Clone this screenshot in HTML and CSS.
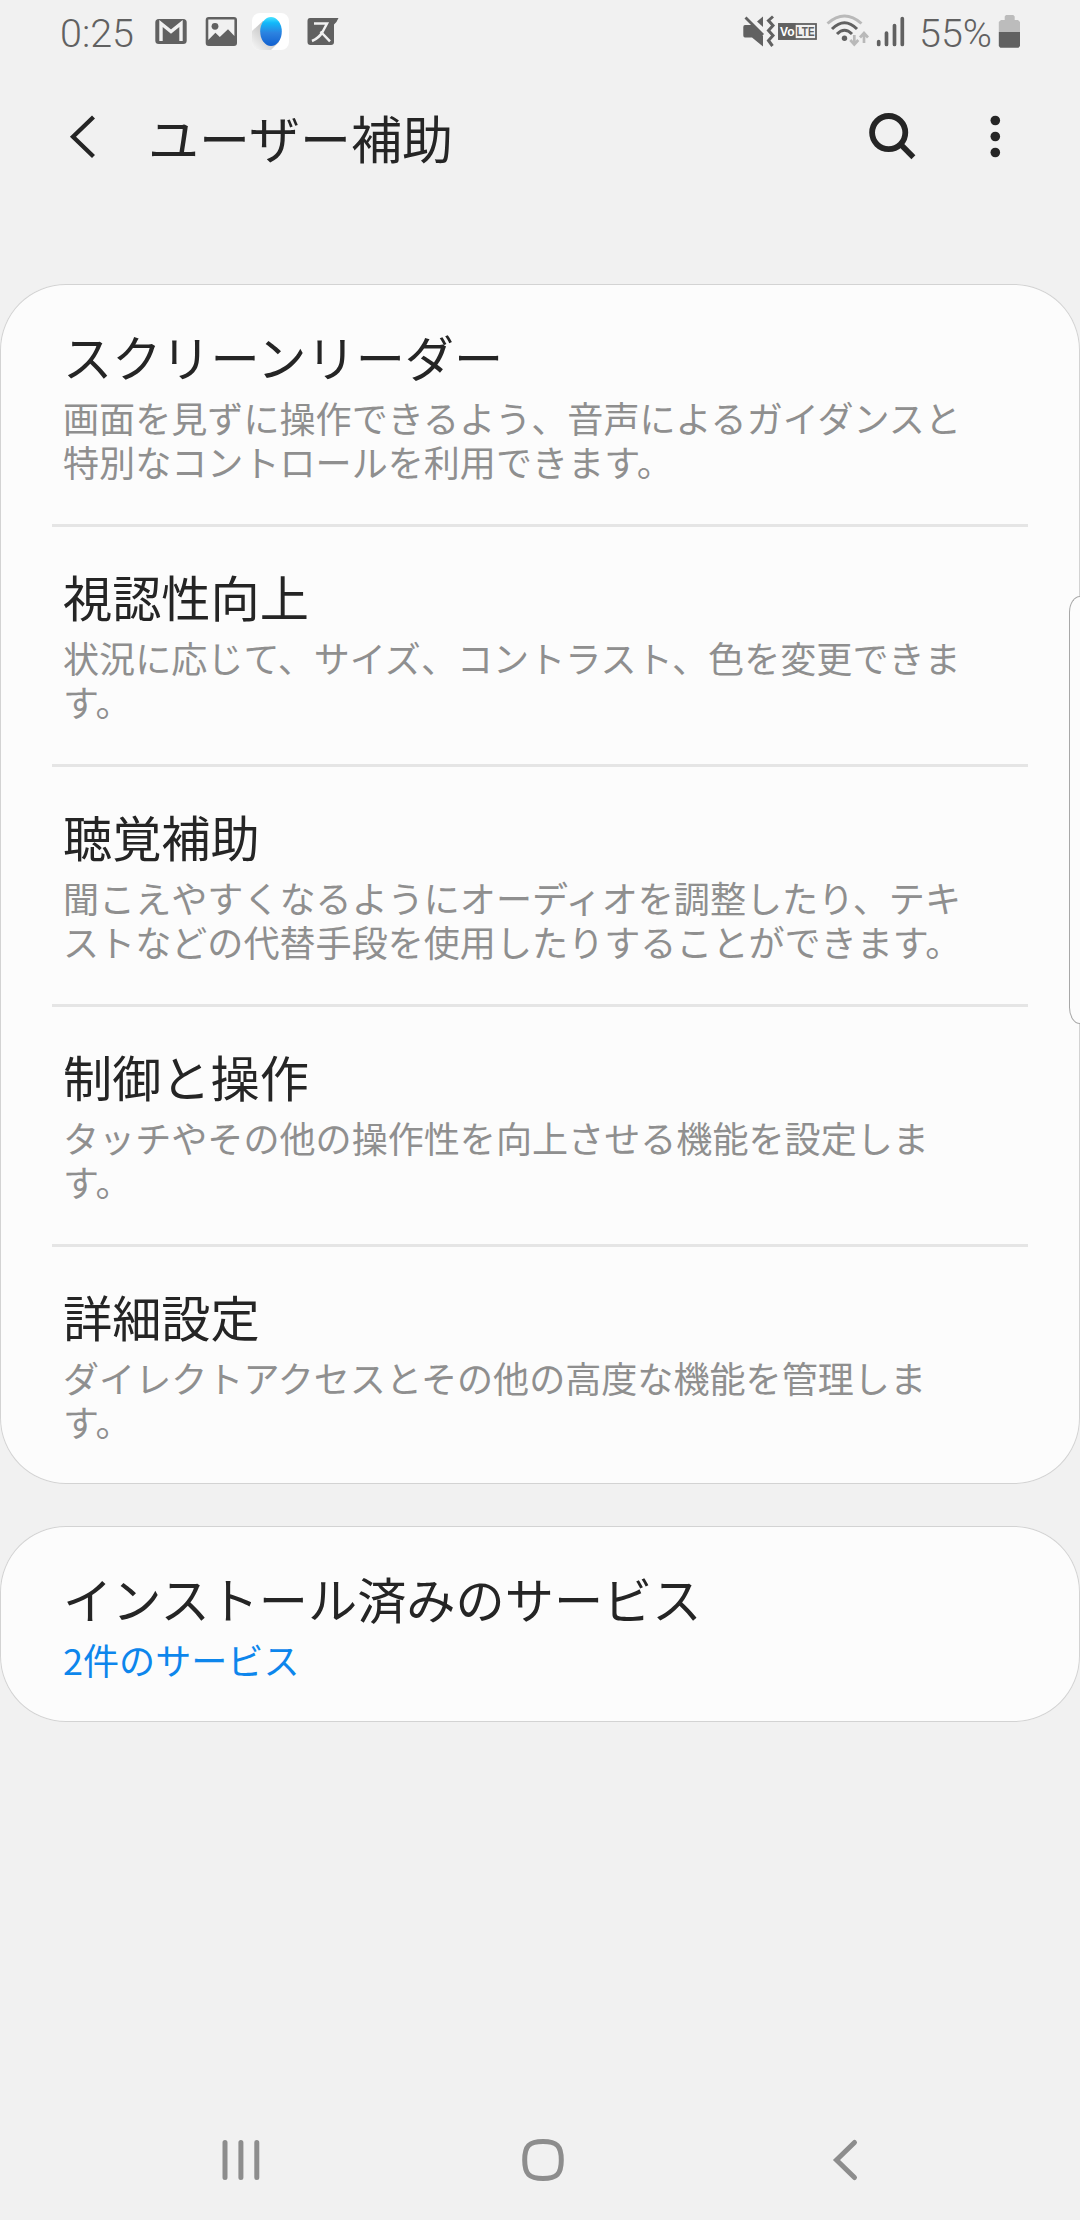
FILE: index.html
```html
<!DOCTYPE html>
<html lang="ja">
<head>
<meta charset="utf-8">
<title>ユーザー補助</title>
<link rel="stylesheet" href="styles.css">
</head>
<body>
<div class="screen">
  <div class="status">
    <span class="clock">0:25</span>
    <svg class="icon" width="50" height="64" viewBox="146 0 50 64">
      <rect x="155.3" y="19" width="31.4" height="25" rx="3.5" fill="#616161"/>
      <path d="M161 41V23.5L171 31.5L181 23.5V41" fill="none" stroke="#f1f1f1" stroke-width="3.4"/>
    </svg>
    <svg class="icon" width="50" height="64" viewBox="196 0 50 64">
      <rect x="205.7" y="17" width="31.3" height="29" rx="3" fill="#616161"/>
      <path d="M208.300 19.500H234.400V36L228 29.300L219.800 37L215.400 32.700L208.300 40Z" fill="#f1f1f1"/>
      <circle cx="215" cy="26.300" r="3.400" fill="#616161"/>
    </svg>
    <svg class="icon" width="50" height="64" viewBox="246 0 50 64">
      <defs>
        <linearGradient id="drop" x1="0" y1="0" x2="0" y2="1"><stop offset="0" stop-color="#4be4ff"/><stop offset=".2" stop-color="#12b9fa"/><stop offset=".55" stop-color="#2c82e0"/><stop offset="1" stop-color="#1261d0"/></linearGradient>
        <linearGradient id="shade" x1="1" y1="0" x2="0" y2="1"><stop offset=".3" stop-color="#bdbdbd"/><stop offset="1" stop-color="#fafafa"/></linearGradient>
      </defs>
      <rect x="252" y="13" width="37" height="37" rx="8" fill="#fff"/>
      <path d="M263 21L252 31V42Q252 50 260 50H271L279 42Z" fill="url(#shade)"/>
      <ellipse cx="271" cy="31.5" rx="10.800" ry="14.500" fill="url(#drop)"/>
    </svg>
    <svg class="icon" width="50" height="64" viewBox="296 0 50 64">
      <path d="M310 18H338.500Q337 22 334 24.500V42Q334 45 331 45H310.500Q307.500 45 307.500 42V21Q307.500 18 310 18Z" fill="#616161"/>
      <path d="M314 23.500H327L322.500 32Q319 38 312 41M320.500 31.500L330 41.300" fill="none" stroke="#f1f1f1" stroke-width="2.500"/>
    </svg>
    <span class="spacer"></span>
    <svg class="icon" width="36" height="64" viewBox="740 0 36 64">
      <path d="M745 25H752L763 36V46.500L752 37.500H745Q743.300 37.500 743.300 35.500V27Q743.300 25 745 25Z" fill="#616161"/>
      <path d="M763 16.500V27L757 21.500Z" fill="#616161"/>
      <path d="M745.500 17.500L763 35" stroke="#616161" stroke-width="2.800"/>
      <path d="M773 16.500L768.500 20.500L773 25.500L768.500 30.500L773 35.500L768.500 40.500L772.500 46" fill="none" stroke="#616161" stroke-width="3"/>
    </svg>
    <svg class="icon" width="46" height="64" viewBox="776 0 46 64">
      <rect x="779" y="24" width="37" height="15" fill="none" stroke="#616161" stroke-width="1.800"/>
      <rect x="778.200" y="23.200" width="17.500" height="16.600" fill="#616161"/>
      <text x="780" y="36.300" class="tag" fill="#fff" textLength="14.500" lengthAdjust="spacingAndGlyphs">Vo</text>
      <text x="796.500" y="36.300" class="tag" fill="#616161" textLength="18" lengthAdjust="spacingAndGlyphs">LTE</text>
    </svg>
    <svg class="icon" width="50" height="64" viewBox="822 0 50 64" fill="none">
      <path d="M827.500 23.500Q844.500 8.500 861.500 23.500" stroke="#b9b9b9" stroke-width="3"/>
      <path d="M832 29Q844.500 16.500 857 29" stroke="#616161" stroke-width="3"/>
      <path d="M837 34Q844.500 26.500 852 34" stroke="#616161" stroke-width="3"/>
      <circle cx="844.500" cy="38.300" r="2.700" fill="#616161"/>
      <path d="M854.300 35V44M850.300 40L854.300 44.500L858.300 40M864 43V33.500M860 37.500L864 33L868 37.500" stroke="#b9b9b9" stroke-width="2.700"/>
    </svg>
    <svg class="icon" width="46" height="64" viewBox="872 0 46 64">
      <path d="M878.700 41.500V44.500M886.500 33V44.500M894.500 25.500V44.500M902.300 18.500V44.500" stroke="#616161" stroke-width="3.700" stroke-linecap="round"/>
    </svg>
    <span class="percent">55%</span>
    <svg class="icon" width="30" height="64" viewBox="994 0 30 64">
      <path d="M998.800 32V22L1001 20H1004.700V16.500L1006 15H1013.300L1014.700 16.500V20H1018L1020 22V32Z" fill="#bcbcbc"/>
      <path d="M998.800 32H1020V46L1018.500 47.700H1000.300L998.800 46Z" fill="#616161"/>
    </svg>
  </div>

  <header class="appbar">
    <svg class="icon" width="60" height="60" viewBox="54 107 60 60"><path d="M93.500 117L73 136.800L93.500 156.500" fill="none" stroke="#252525" stroke-width="4.300"/></svg>
    <h1 class="heading">ユーザー補助</h1>
    <svg class="icon" width="60" height="60" viewBox="862 107 60 60"><circle cx="888.700" cy="132.600" r="16.600" fill="none" stroke="#252525" stroke-width="5.800"/><path d="M900.800 144.500L913.400 157.300" stroke="#252525" stroke-width="5.600"/></svg>
    <svg class="icon dots" width="40" height="60" viewBox="975 107 40 60" fill="#252525"><circle cx="995.300" cy="120.500" r="4.800"/><circle cx="995.300" cy="136.500" r="4.800"/><circle cx="995.300" cy="152.500" r="4.800"/></svg>
  </header>

  <main class="content">
    <section class="card">
      <div class="item"><h2 class="title">スクリーンリーダー</h2><p class="desc">画面を見ずに操作できるよう、音声によるガイダンスと<br>特別なコントロールを利用できます。</p></div>
      <div class="item"><h2 class="title">視認性向上</h2><p class="desc">状況に応じて、サイズ、コントラスト、色を変更できま<br>す。</p></div>
      <div class="item"><h2 class="title">聴覚補助</h2><p class="desc">聞こえやすくなるようにオーディオを調整したり、テキ<br>ストなどの代替手段を使用したりすることができます。</p></div>
      <div class="item"><h2 class="title">制御と操作</h2><p class="desc">タッチやその他の操作性を向上させる機能を設定しま<br>す。</p></div>
      <div class="item"><h2 class="title">詳細設定</h2><p class="desc">ダイレクトアクセスとその他の高度な機能を管理しま<br>す。</p></div>
    </section>
    <section class="card">
      <div class="item short"><h2 class="title">インストール済みのサービス</h2><p class="desc link">2件のサービス</p></div>
    </section>
  </main>

  <nav class="navbar">
    <svg class="icon" width="60" height="60" viewBox="211 2130 60 60"><path d="M225 2142.500V2177.500M240.900 2142.500V2177.500M256.800 2142.500V2177.500" stroke="#8d8d8d" stroke-width="5" stroke-linecap="round"/></svg>
    <svg class="icon" width="60" height="60" viewBox="513 2130 60 60"><path d="M543 2141.500C557 2141.500 561.300 2146 561.300 2160S557 2178.500 543 2178.500S524.700 2174 524.700 2160S529 2141.500 543 2141.500Z" fill="none" stroke="#8d8d8d" stroke-width="5"/></svg>
    <svg class="icon" width="60" height="60" viewBox="815 2130 60 60"><path d="M854.500 2142.500L836.500 2160L854.500 2177.500" fill="none" stroke="#8d8d8d" stroke-width="5" stroke-linecap="round"/></svg>
  </nav>
  <div class="edge-handle"></div>
</div>
</body>
</html>
```
FILE: styles.css
```css
* { box-sizing: border-box; }

body {
  margin: 0;
  background: #f1f1f1;
  font-family: "Noto Sans CJK JP", sans-serif;
  color: #252525;
}

h1, h2, p { margin: 0; font-weight: 400; }

.screen {
  position: relative;
  display: flex;
  flex-direction: column;
  width: 1080px;
  height: 2220px;
  overflow: hidden;
}

.icon { display: block; flex: none; }

.status {
  display: flex;
  height: 64px;
  padding: 0 56px 0 60px;
  font: 350 39.500px/67px Roboto, sans-serif;
  color: #616161;
}
.clock { width: 86px; white-space: nowrap; }
.percent { width: 76px; padding-left: 1px; white-space: nowrap; }
.spacer { flex: 1; }
.tag { font: 700 12.500px "Liberation Sans", sans-serif; }

.appbar {
  display: flex;
  align-items: center;
  height: 146px;
  padding: 0 65px 0 54px;
}
.heading {
  flex: 1;
  padding: 0 0 0 34px;
  font-size: 51px;
  line-height: 60px;
}
.dots { margin-left: 53px; }

.content {
  display: flex;
  flex-direction: column;
  gap: 42px;
  padding-top: 74px;
}

.card {
  border-radius: 66px;
  background: #fcfcfc;
  box-shadow: inset 0 0 0 1px #d3d3d3;
}

.item { height: 240px; padding: 42px 63px 0; }
.item + .item { padding-top: 0; }
.item + .item::before {
  content: "";
  display: block;
  height: 3px;
  margin: 0 -11px 39px;
  background: #e5e5e5;
}
.short { height: 196px; }

.title { font-size: 49.200px; line-height: 60px; white-space: nowrap; }
.desc {
  padding-top: 9px;
  font-size: 36.100px;
  line-height: 44px;
  color: #8f8f8f;
  white-space: nowrap;
}
.link { color: #0d86ec; }

.navbar {
  display: flex;
  justify-content: space-between;
  align-items: center;
  height: 120px;
  margin-top: auto;
  padding: 0 205px 0 211px;
}

.edge-handle {
  position: absolute;
  top: 596px;
  right: 0;
  width: 11px;
  height: 428px;
  border: 1px solid #a8a8a8;
  border-right: 0;
  border-radius: 12px 0 0 12px / 18px 0 0 18px;
  background: #fcfcfc;
}
```
